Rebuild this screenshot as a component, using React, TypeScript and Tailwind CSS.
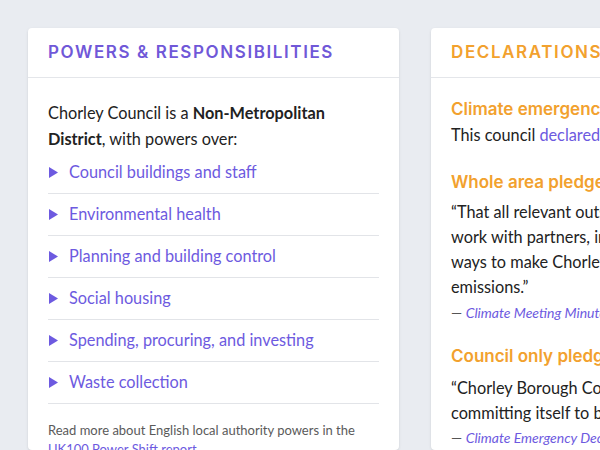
import React from 'react';

const powers = [
  'Council buildings and staff',
  'Environmental health',
  'Planning and building control',
  'Social housing',
  'Spending, procuring, and investing',
  'Waste collection',
];

function Triangle() {
  return (
    <svg width="10" height="11" viewBox="0 0 10 11" className="shrink-0">
      <polygon points="0,0 9,5.5 0,11" fill="#6d5ae0" />
    </svg>
  );
}

export default function App() {
  const heading = { fontFamily: 'Inter, "Open Sans", sans-serif' };

  return (
    <div
      className="flex h-[450px] w-[600px] gap-8 overflow-hidden bg-[#e9ecf1] pl-7 pt-7"
      style={{ fontFamily: 'Lato, "Noto Sans", sans-serif' }}
    >
      {/* Powers card */}
      <div className="w-[371px] shrink-0 rounded-[4px] bg-white shadow-sm">
        <div className="flex h-[50px] items-center border-b border-[#e4e6ea] px-5">
          <h2 style={heading} className="text-[17px] font-semibold uppercase tracking-[1.6px] text-[#7058d8]">
            Powers &amp; Responsibilities
          </h2>
        </div>
        <div className="px-5 pt-[22px]">
          <p className="text-[16.3px] leading-[26px] text-[#222]">
            Chorley Council is a <strong className="font-bold">Non-Metropolitan District</strong>, with powers over:
          </p>
          <ul>
            {powers.map((p) => (
              <li key={p} className="flex h-[42px] items-center gap-[10px] border-b border-[#e2e4e8] pl-[1px]">
                <Triangle />
                <span className="text-[16.3px] text-[#6d5ae0]">{p}</span>
              </li>
            ))}
          </ul>
          <p className="mt-[17px] text-[13px] leading-[19px] text-[#5a5a5a]">
            Read more about English local authority powers in the{' '}
            <a className="text-[#6d5ae0]">UK100 Power Shift report</a>.
          </p>
        </div>
      </div>

      {/* Declarations card */}
      <div className="w-[371px] shrink-0 rounded-[4px] bg-white shadow-sm">
        <div className="flex h-[50px] items-center border-b border-[#e4e6ea] px-5">
          <h2 style={heading} className="text-[17px] font-semibold uppercase tracking-[1.6px] text-[#f2a12e]">
            Declarations
          </h2>
        </div>
        <div className="px-5 pt-5 text-[16.3px] text-[#222]">
          <h3 style={heading} className="whitespace-nowrap text-[17px] font-semibold leading-[22px] text-[#f2a12e]">
            Climate emergency
          </h3>
          <p className="mt-[2px] whitespace-nowrap leading-[25px]">
            This council <a className="text-[#6d5ae0]">declared a climate emergency</a> in 2019.
          </p>
          <h3 style={heading} className="mt-6 whitespace-nowrap text-[17px] font-semibold leading-[22px] text-[#f2a12e]">
            Whole area pledge
          </h3>
          <p className="mt-[6px] whitespace-nowrap leading-[25px]">
            “That all relevant outside bodies are asked to
            <br />
            work with partners, including the County Council,
            <br />
            ways to make Chorley carbon neutral in its
            <br />
            emissions.”
          </p>
          <p className="mt-[4px] whitespace-nowrap text-[14px] leading-[20px] text-[#555]">
            — <a className="italic text-[#6d5ae0]">Climate Meeting Minutes</a>
          </p>
          <h3 style={heading} className="mt-[22px] whitespace-nowrap text-[17px] font-semibold leading-[22px] text-[#f2a12e]">
            Council only pledge
          </h3>
          <p className="mt-[8px] whitespace-nowrap leading-[25px]">
            “Chorley Borough Council is
            <br />
            committing itself to becoming carbon neutral by 2030.”
          </p>
          <p className="mt-[3px] whitespace-nowrap text-[14px] leading-[20px] text-[#555]">
            — <a className="italic text-[#6d5ae0]">Climate Emergency Declaration</a>
          </p>
        </div>
      </div>
    </div>
  );
}
